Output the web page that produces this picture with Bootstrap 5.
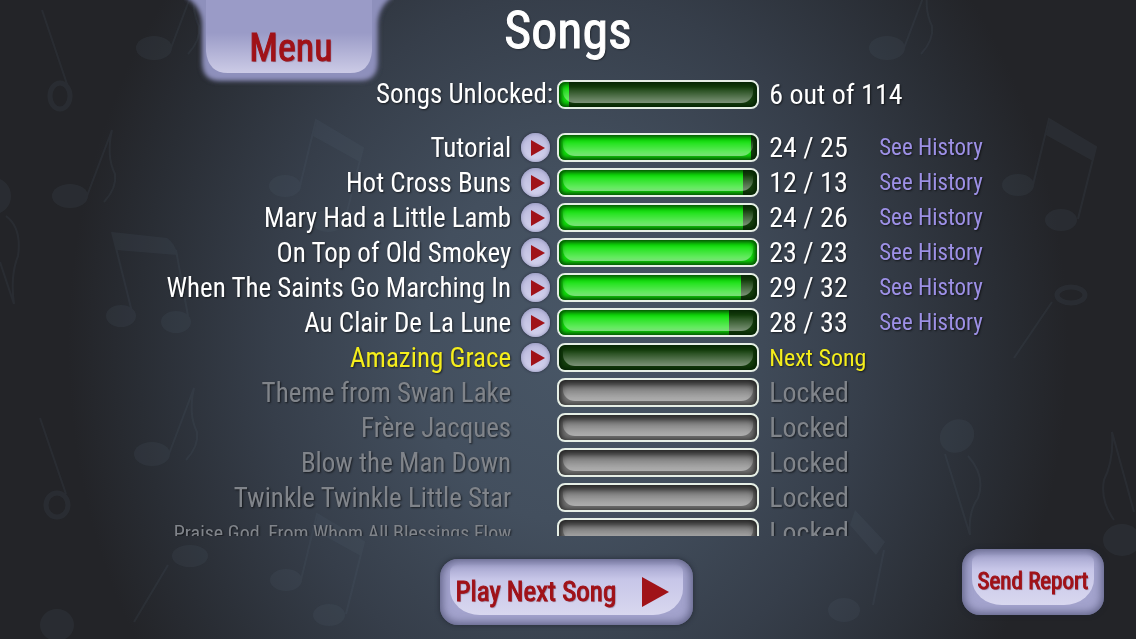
<!DOCTYPE html>
<html lang="en">
<head>
<meta charset="utf-8">
<meta name="viewport" content="width=device-width, initial-scale=1">
<title>Songs</title>
<link href="https://cdn.jsdelivr.net/npm/bootstrap@5.3.0/dist/css/bootstrap.min.css" rel="stylesheet">
<style>
:root { --ink-red: #a01218; }
body {
  font-family: "Roboto Condensed", "Open Sans Condensed", "Liberation Sans", sans-serif;
  font-size: 27px; line-height: 34px; color: #fff;
  background: #232428 radial-gradient(ellipse 44% 92% at 50% 54%, #485666 0%, #434f5e 30%, #363e4a 60%, #292d34 86%, #232428 100%);
  text-shadow: 1px 1px 2px rgba(0, 0, 0, .6);
}
.backdrop { z-index: -1; }
.app-head { height: 80px; }
.app-foot { height: 103px; }
.app-main { min-height: 0; }
.screen-title { font-size: 52px; line-height: 62px; font-weight: 400; -webkit-text-stroke: 1px; }

/* glossy lilac buttons */
.menu-tab {
  width: 178px; height: 82px; margin-left: 200px; padding: 14px 0 0 4px; z-index: 2;
  font-size: 38px; color: var(--ink-red); background: none; border: 0; -webkit-text-stroke: 1px;
}
.menu-tab svg { left: -16px; top: 0; z-index: -1; }
.glossy {
  position: relative; z-index: 0; border: 0; border-radius: 18px; height: 66px;
  color: var(--ink-red); background: #a3a3cd; line-height: 30px; -webkit-text-stroke: 1px;
  box-shadow: inset 0 0 9px 2px rgba(70, 72, 105, .75), 0 0 4px 1px rgba(30, 34, 45, .55);
}
.glossy::before {
  content: ""; position: absolute; z-index: -1; inset: 5px 10px 10px;
  border-radius: 10px 10px 30px 30px / 8px 8px 26px 26px;
  background: linear-gradient(rgba(195, 194, 230, 0), #c7c6e8 30%, #d9d8ef);
}
.glossy, .menu-tab { text-shadow: 1px 1px 1px rgba(60, 20, 50, .4); }
.play-next { width: 253px; font-size: 27px; margin: 0 4px 14px 0; }
.send-report { width: 142px; font-size: 23px; margin: 0 32px 24px 0; }

/* song list */
.song-scroll { overflow: hidden auto; scrollbar-width: none; margin-top: 21px; min-height: 0; }
.song-scroll::-webkit-scrollbar { display: none; }
.song-table { table-layout: fixed; width: 100%; }
.song-table :is(th, td) { height: 35px; padding: 0; font-weight: 400; white-space: nowrap; vertical-align: middle; }
.song-summary :is(th, td) { height: 29px; line-height: 29px; }
.song-table .score-cell { padding-left: 10px; font-size: 28px; }
.c-name { width: 45%; } .c-play { width: 46px; } .c-bar { width: 202px; } .c-score { width: 120px; }
.is-next { color: #f5ee1c; } .is-locked { color: #80848a; }
.song-table .long-name { font-size: 20px; }
.song-table .next-label { font-size: 24px; }
.history-link { display: block; font-size: 23px; color: #9d90e6; text-decoration: none; }

.play-btn {
  width: 29px; height: 29px; margin-left: 10px; border: 0; border-radius: 50%; background: linear-gradient(#b9b8dc, #d5d4ee);
  box-shadow: inset 0 0 4px #8a8cb5, 0 0 3px rgba(30, 30, 50, .8);
}
.meter {
  --bs-progress-height: 29px; --bs-progress-bg: #143f0c; --bs-progress-bar-bg: #10e00a; --bs-progress-border-radius: 8px;
  position: relative; border: 2px solid #e6efe6; border-radius: 8px;
}
.meter::before, .meter::after { content: ""; position: absolute; inset: 0; border-radius: 6px; }
.meter::before { box-shadow: inset 0 0 5px 2px rgba(0, 25, 0, .85); z-index: 1; }
.meter::after {
  inset: 2px 4px 4px; z-index: 2; border-radius: 4px 4px 12px 12px / 4px 4px 11px 11px;
  background: linear-gradient(rgba(255, 255, 255, 0) 15%, rgba(255, 255, 255, .45));
}
.meter-locked { --bs-progress-bg: #767676; }
.meter-locked::before { box-shadow: inset 0 2px 7px 2px rgba(0, 0, 0, .75); }
</style>
</head>
<body class="overflow-hidden">
<svg class="backdrop position-fixed top-0 start-0 w-100 h-100" viewBox="0 0 1136 639" preserveAspectRatio="xMidYMid slice" aria-hidden="true">
  <defs>
    <g id="quaver"><ellipse cx="0" cy="0" rx="18" ry="12" stroke="none"/><path d="M17 0 42-66Q36-40 45-22 47-8 34 6" fill="none"/></g>
    <g id="beam"><ellipse cx="0" cy="0" rx="16" ry="11" stroke="none"/><ellipse cx="43" cy="35" rx="16" ry="11" stroke="none"/><path d="M15 0 31-66 78-38 60 34" fill="none"/><path d="M32-66 78-38 75-24 28-50Z" stroke="none"/></g>
  </defs>
  <g fill="#5d7080" stroke="#5d7080" stroke-width="2" opacity=".12">
    <use href="#quaver" x="154" y="48"/>
    <use href="#quaver" x="70" y="196"/>
    <use href="#quaver" x="152" y="454"/>
    <use href="#quaver" x="887" y="48"/>
    <use href="#beam" x="1018" y="185"/>
    <use href="#beam" x="285" y="186"/>
    <use href="#beam" x="286" y="580"/>
    <ellipse cx="957" cy="436" rx="18" ry="16" transform="rotate(-40 957 436)" stroke="none"/>
    <path d="M945 454 970 535Q968 512 978 498 986 476 968 456" fill="none"/>
    <ellipse cx="1122" cy="540" rx="18" ry="15"/>
    <path d="M1134 512 1112 432Q1114 460 1104 480 1100 500 1114 520" fill="none"/>
    <ellipse cx="-6" cy="196" rx="16" ry="17"/>
    <path d="M6 216Q22 228 18 256 10 276 14 304L0 262" fill="none"/>
    <ellipse cx="57" cy="625" rx="16" ry="15"/>
    <ellipse cx="190" cy="556" rx="17" ry="10"/>
    <ellipse cx="844" cy="610" rx="15" ry="11"/>
    <ellipse cx="121" cy="316" rx="14" ry="10"/><ellipse cx="176" cy="322" rx="14" ry="10"/>
    <path d="M112 232 167 238Q176 244 177 255L116 250Z" stroke="none"/>
    <path d="M112 232 132 312M176 250 188 316M42 10 69 90M40 418 66 494M168 565 134 622M1052 302 1014 358" fill="none"/>
    <g fill="none" stroke-width="5"><ellipse cx="60" cy="96" rx="10" ry="13"/><ellipse cx="57" cy="505" rx="11" ry="12"/><ellipse cx="1071" cy="295" rx="14" ry="8"/></g>
    <path d="M855 510 885 542 876 555 850 525Z" stroke="none"/>
    <path d="M884 550 873 605" fill="none"/>
  </g>
</svg>

<div class="vh-100 d-flex flex-column">
  <header class="app-head position-relative flex-shrink-0">
    <button type="button" class="menu-tab position-absolute top-0 start-0">
      <svg class="position-absolute" width="210" height="90" viewBox="0 0 210 90" aria-hidden="true">
        <defs>
          <linearGradient id="tabGloss" x1="0" y1="0" x2="0" y2="1"><stop offset=".45" stop-color="#9a9bc7"/><stop offset="1" stop-color="#cccbe6"/></linearGradient>
          <filter id="soft" x="-10%" y="-10%" width="120%" height="120%"><feGaussianBlur stdDeviation="2"/></filter>
        </defs>
        <path d="M-4-6Q18 4 18 26V62Q18 81 36 81H176Q194 81 194 62V26Q194 4 214-6Z" fill="#8e90bc" stroke="#45485f" stroke-width="2" filter="url(#soft)"/>
        <path d="M22 0H188V51Q186 73 166 73H44Q24 73 22 51Z" fill="url(#tabGloss)"/>
      </svg>
      Menu
    </button>
    <h1 class="screen-title text-center m-0">Songs</h1>
  </header>

  <main class="app-main d-flex flex-column flex-grow-1">
    <div class="song-summary flex-shrink-0">
      <table class="song-table">
        <colgroup><col class="c-name"><col class="c-play"><col class="c-bar"><col></colgroup>
        <tbody><tr>
          <th scope="row" colspan="2" class="text-end pe-1">Songs Unlocked:</th>
          <td><div class="progress meter" role="progressbar" aria-label="Songs unlocked" aria-valuenow="6" aria-valuemin="0" aria-valuemax="114"><div class="progress-bar" style="width: 5%"></div></div></td>
          <td class="score-cell">6 out of 114</td>
        </tr></tbody>
      </table>
    </div>
    <div class="song-scroll flex-grow-1">
      <table class="song-table">
        <colgroup><col class="c-name"><col class="c-play"><col class="c-bar"><col class="c-score"><col></colgroup>
        <tbody id="songs"></tbody>
      </table>
    </div>
  </main>

  <footer class="app-foot row g-0 flex-shrink-0 align-items-end">
    <div class="col"></div>
    <div class="col-auto">
      <button type="button" class="glossy play-next d-flex align-items-center justify-content-between ps-3 pe-4">
        <span>Play Next Song</span>
        <svg width="27" height="30" viewBox="0 0 27 30" aria-hidden="true"><path d="M0 0 27 15 0 30Z" fill="#a01218"/></svg>
      </button>
    </div>
    <div class="col d-flex justify-content-end"><button type="button" class="glossy send-report p-0">Send Report</button></div>
  </footer>
</div>

<script src="https://cdn.jsdelivr.net/npm/bootstrap@5.3.0/dist/js/bootstrap.bundle.min.js"></script>
<script>
const songs = [
  ["Tutorial", 24, 25, 97], ["Hot Cross Buns", 12, 13, 93], ["Mary Had a Little Lamb", 24, 26, 93],
  ["On Top of Old Smokey", 23, 23, 100], ["When The Saints Go Marching In", 29, 32, 92], ["Au Clair De La Lune", 28, 33, 86],
  ["Amazing Grace"], ["Theme from Swan Lake"], ["Frère Jacques"], ["Blow the Man Down"],
  ["Twinkle Twinkle Little Star"], ["Praise God, From Whom All Blessings Flow"]
];
const next = 6;
document.getElementById("songs").innerHTML = songs.map(([name, got, total, pct], i) => {
  const state = i < next ? "" : i === next ? "is-next" : "is-locked";
  const play = i <= next ? `<button type="button" class="play-btn d-flex align-items-center justify-content-center p-0" aria-label="Play ${name}"><svg class="ms-1" width="14" height="16" viewBox="0 0 14 16" aria-hidden="true"><path d="M0 0 14 8 0 16Z" fill="#a01218"/></svg></button>` : "";
  const score = i < next ? `${got} / ${total}` : i === next ? "Next Song" : "Locked";
  const link = i < next ? `<a class="history-link" href="#history-${i}">See History</a>` : "";
  return `<tr class="${state}"><th scope="row" class="text-end${name.length > 32 ? " long-name" : ""}">${name}</th>
    <td>${play}</td>
    <td><div class="progress meter ${i > next ? "meter-locked" : ""}" role="progressbar" aria-label="${name}" aria-valuenow="${pct || 0}" aria-valuemin="0" aria-valuemax="100"><div class="progress-bar" style="width: ${pct || 0}%"></div></div></td>
    <td class="score-cell${i === next ? " next-label" : ""}">${score}</td><td>${link}</td></tr>`;
}).join("");
</script>
</body>
</html>
